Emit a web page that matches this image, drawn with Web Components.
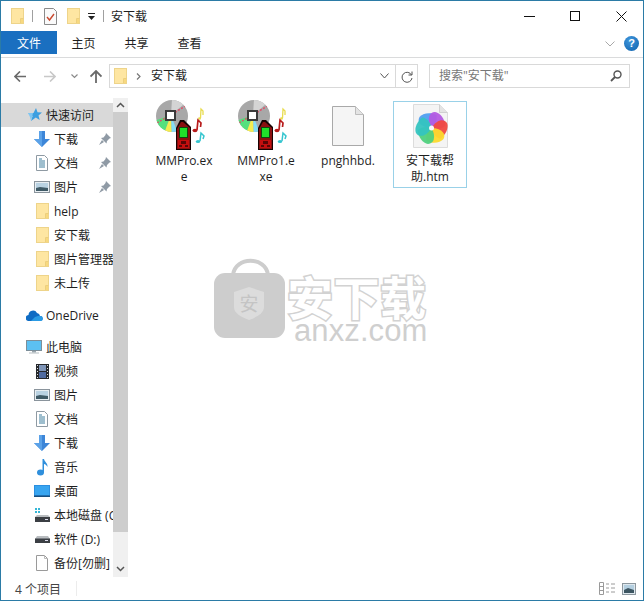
<!DOCTYPE html>
<html lang="zh">
<head>
<meta charset="utf-8">
<title>安下载</title>
<style>
  html, body { margin: 0; height: 100%; background: #fff; }
  body { font: 12px "Open Sans", "Noto Sans CJK SC", sans-serif; color: #1e1e1e; }
</style>
</head>
<body>
<explorer-window>
  <title-bar slot="title">安下载</title-bar>
  <ribbon-tabs slot="ribbon"></ribbon-tabs>
  <address-row slot="address"></address-row>
  <nav-tree slot="nav">
    <nav-item icon="star" level="1" selected>快速访问</nav-item>
    <nav-item icon="down" pin>下载</nav-item>
    <nav-item icon="doc" pin>文档</nav-item>
    <nav-item icon="pic" pin>图片</nav-item>
    <nav-item icon="folder">help</nav-item>
    <nav-item icon="folder">安下载</nav-item>
    <nav-item icon="folder">图片管理器</nav-item>
    <nav-item icon="folder">未上传</nav-item>
    <nav-item icon="cloud" level="1" class="group">OneDrive</nav-item>
    <nav-item icon="pc" level="1" class="group">此电脑</nav-item>
    <nav-item icon="film">视频</nav-item>
    <nav-item icon="pic">图片</nav-item>
    <nav-item icon="doc">文档</nav-item>
    <nav-item icon="down">下载</nav-item>
    <nav-item icon="note">音乐</nav-item>
    <nav-item icon="desk">桌面</nav-item>
    <nav-item icon="sysdisk">本地磁盘 (C:)</nav-item>
    <nav-item icon="disk">软件 (D:)</nav-item>
    <nav-item icon="page">备份[勿删]</nav-item>
  </nav-tree>
  <file-pane slot="files">
    <file-item icon="mmpro">MMPro.exe</file-item>
    <file-item icon="mmpro">MMPro1.exe</file-item>
    <file-item icon="blank">pnghhbd.</file-item>
    <file-item icon="wheel" selected>安下载帮助.htm</file-item>
  </file-pane>
  <water-mark slot="files"></water-mark>
  <status-bar slot="status">4 个项目</status-bar>
</explorer-window>

<script>
// Folder and pictures are used in many places, so all icons live in one table.
const folder = `<svg width="13" height="16" viewBox="0 0 13 16"><rect x=".5" y=".5" width="12" height="15" fill="#fee6a2" stroke="#eed48a"/><path d="M9.500 15v-4.500H12.500" fill="none" stroke="#eccf7e"/><rect x="10" y="11" width="2" height="4" fill="#f8d97f"/></svg>`

const petals = [['#4f9ff0', 0], ['#b45be2', 60], ['#f04a40', 120], ['#fcd92e', 180], ['#4fd07f', 240], ['#35c4c0', 300]]

const icons = {
  folder,
  check: `<svg width="13" height="17" viewBox="0 0 13 17"><path d="M.5.500h9l3 3v13H.5z" fill="#fafafa" stroke="#8a8a8a"/><path d="M3 9l2.500 3L10 6" fill="none" stroke="#c9492f" stroke-width="1.400"/></svg>`,
  star: `<svg width="15" height="14" viewBox="0 0 15 14"><path d="M9 0l1.500 4.200L15 4.500l-3.500 3 1.200 4.600L8.800 9.500 4 13l1.600-5L1 5h5.500z" fill="#3d9fe0"/><path d="M1 5h5L4 13l-1-4z" fill="#7fc6f2"/></svg>`,
  down: `<svg width="16" height="16" viewBox="0 0 16 16"><path d="M5 0h6v8h5l-8 8-8-8h5z" fill="#3d86d8"/><path d="M5 0h3v16L0 8h5z" fill="#5ba2e8"/></svg>`,
  doc: `<svg width="12" height="16" viewBox="0 0 12 16"><path d="M.5.500h8l3 3v12H.5z" fill="#fff" stroke="#8f9aa3"/><path d="M3 4h3M3 6h6M3 8h6M3 10h6M3 12h6" stroke="#3f7f9e"/></svg>`,
  pic: `<svg width="16" height="12" viewBox="0 0 16 12"><rect x=".5" y=".5" width="15" height="11" fill="#e8eef2" stroke="#8a949c"/><rect x="2" y="2" width="12" height="8" fill="#b9d2e2"/><path d="M2 7l4-1 8 1v3H2z" fill="#3f5a66"/></svg>`,
  cloud: `<svg width="17" height="11" viewBox="0 0 17 11"><path d="M3 11a3 3 0 0 1-.5-6A4.500 4.500 0 0 1 11 3a3.500 3.500 0 0 1 3 3 2.500 2.500 0 0 1 .5 5z" fill="#0f6cc4"/><path d="M5 11l4-4 3-1 2 0a2.500 2.500 0 0 1 .5 5z" fill="#2a9be4"/></svg>`,
  pc: `<svg width="16" height="14" viewBox="0 0 16 14"><rect x=".5" y=".5" width="15" height="10" fill="#5cc0f2" stroke="#7c8e99"/><rect x="6" y="11" width="4" height="1.500" fill="#9aa6ad"/><rect x="3" y="12.500" width="10" height="1" fill="#b5bdc2"/></svg>`,
  film: `<svg width="13" height="15" viewBox="0 0 13 15"><rect width="13" height="15" fill="#26282c"/><rect x="3" y="1" width="7" height="6" fill="#7f95b8"/><rect x="3" y="8" width="7" height="6" fill="#4f6aa0"/><path d="M1 1h1v1H1zM1 4h1v1H1zM1 7h1v1H1zM1 10h1v1H1zM1 13h1v1H1zM11 1h1v1h-1zM11 4h1v1h-1zM11 7h1v1h-1zM11 10h1v1h-1zM11 13h1v1h-1z" fill="#ddd"/></svg>`,
  note: `<svg width="11" height="17" viewBox="0 0 11 17"><ellipse cx="3.500" cy="13.500" rx="3.500" ry="3" fill="#2f8fdc"/><path d="M5.500 0h1.500c.5 3 4 4 3.500 8-1-2-2.500-3-3.500-3v8.500h-1.500z" fill="#2f8fdc"/></svg>`,
  desk: `<svg width="16" height="12" viewBox="0 0 16 12"><rect width="16" height="12" fill="#2b8fe0"/><rect x="1" y="1" width="14" height="9" fill="#38a5f0"/><rect y="10.500" width="16" height="1.500" fill="#174f80"/></svg>`,
  sysdisk: `<svg width="15" height="14" viewBox="0 0 15 14"><path d="M0 0h2v2H0zM3 0h2v2H3zM0 3h2v2H0zM3 3h2v2H3z" fill="#35b6d6"/><path d="M0 9l2-2h11l2 2z" fill="#b9bdc0"/><rect y="9" width="15" height="5" fill="#3b3f44"/><rect x="10" y="11" width="3" height="1" fill="#dde"/></svg>`,
  disk: `<svg width="15" height="7" viewBox="0 0 15 7"><path d="M0 3l2-3h11l2 3z" fill="#b9bdc0"/><rect y="2.500" width="15" height="4.500" fill="#3b3f44"/><rect x="10" y="4" width="3" height="1" fill="#dde"/></svg>`,
  page: `<svg width="12" height="16" viewBox="0 0 12 16"><path d="M.5.500h8l3 3v12H.5z" fill="#fff" stroke="#9a9a9a"/><path d="M8.500.500v3h3" fill="none" stroke="#bbb"/></svg>`,
  // the music player program, a cd with a red player in front of it
  mmpro: `<svg width="48" height="48" viewBox="0 0 48 48" overflow="visible">
    <defs><clipPath id="c"><circle cx="12" cy="13" r="16"/></clipPath></defs>
    <g clip-path="url(#c)">
      <rect x="-5" y="-4" width="34" height="36" fill="#a8a8a8"/>
      <path d="M11 12L30 -4H12z" fill="#d4d4d4"/>
      <path d="M11 12L-6 18v18h8z" fill="#55e07e"/>
      <path d="M11 12L2 36h10z" fill="#f4ec50"/>
      <path d="M11 12l1 24h8z" fill="#84dcf4"/>
      <path d="M-3 20L29 1" stroke="#e0506a" stroke-dasharray="2 1.500" stroke-width="1.500"/>
      <rect x="5" y="7" width="11" height="11" fill="#3a3a3a"/>
      <rect x="7" y="9" width="7" height="7" fill="#fff"/>
    </g>
    <path d="M16 25l4-8h4l7 7v23H16z" fill="#180303"/>
    <path d="M17 26l4-7h2l7 6v21H17z" fill="#8a1010"/>
    <rect x="19.500" y="24.500" width="8" height="10" fill="#1fe02a" stroke="#0b4a10"/>
    <path d="M18 37h11v8H18z" fill="#c40f0f"/>
    <path d="M21 38h5v3h-5zM19 42h3v2h-3zM25 42h3v2h-3z" fill="#5a0606"/>
    <ellipse cx="39.500" cy="15.500" rx="1.500" ry="1.200" fill="#e8dc50"/>
    <path d="M40.500 15L41 6l2 2v4" fill="none" stroke="#e8dc50" stroke-width="1.300"/>
    <ellipse cx="35" cy="27.500" rx="2.500" ry="1.700" fill="#b81c1c"/>
    <path d="M37 27l1-10 3 3-.5 4" fill="none" stroke="#b81c1c" stroke-width="1.700"/>
    <ellipse cx="38" cy="38.500" rx="2.200" ry="1.600" fill="#35c5cf"/>
    <path d="M40 38l1-8 3 3-1 3" fill="none" stroke="#35c5cf" stroke-width="1.500"/>
  </svg>`,
  blank: `<svg width="48" height="48" viewBox="0 0 48 48"><path d="M8.500 3.500h23l8 8v31h-31z" fill="#f5f5f5" stroke="#a9a9a9"/><path d="M31.500 3.500v8h8" fill="#e4e4e4" stroke="#bdbdbd"/></svg>`,
  wheel: `<svg width="48" height="48" viewBox="0 0 48 48"><path d="M7.500 1.500h26l8 8v35h-34z" fill="#f4f4f4" stroke="#dcdcdc"/><path d="M33.500 1.500v8h8" fill="#e4e4e4" stroke="#d0d0d0"/>
    ${petals.map(([c, a]) => `<path transform="rotate(${a} 25.500 25)" d="M25.500 25C15.500 25 10.500 19 13.500 14c3-4 11-5 17-2 1 5-1 10-5 13z" fill="${c}" opacity=".95"/>`).join('')}
    <circle cx="25.500" cy="25" r="2.500" fill="#f8f8f8"/></svg>`
}

/**
 * Registers a small element with a shadow root made from the given html.
 *
 * @param {string} name tag name
 * @param {string} html styles and markup
 */
function simple (name, html) {
  const template = document.createElement('template')
  template.innerHTML = html
  customElements.define(name, class extends HTMLElement {
    constructor () {
      super()
      this.attachShadow({ mode: 'open' }).appendChild(template.content.cloneNode(true))
    }
  })
}

simple('explorer-window', `
  <style>
    :host { display: grid; grid-template-rows: 30px 27px 38px 1fr 23px; grid-template-columns: minmax(0, 1fr); width: 644px; height: 601px; box-sizing: border-box; border: 1px solid #2b7ba6; background: #fff; overflow: hidden; }
    .main { display: grid; grid-template-columns: 112px 15px 1fr; min-height: 0; }
    .files { position: relative; min-width: 0; }
    .bar { display: flex; flex-direction: column; background: #f0f0f0; margin-top: 2px; }
    .bar i { display: flex; height: 14px; align-items: center; justify-content: center; }
    .bar b { height: 420px; background: #cdcdcd; }
    .bar u { flex: 1; }
    .bar i:last-child { height: 17px; }
  </style>
  <slot name="title"></slot>
  <slot name="ribbon"></slot>
  <slot name="address"></slot>
  <div class="main">
    <slot name="nav"></slot>
    <div class="bar">
      <i><svg width="9" height="6" viewBox="0 0 9 6"><path d="M1 5l3.500-3.500L8 5" fill="none" stroke="#555" stroke-width="1.500"/></svg></i>
      <b></b>
      <u></u>
      <i><svg width="9" height="6" viewBox="0 0 9 6"><path d="M1 1l3.500 3.500L8 1" fill="none" stroke="#555" stroke-width="1.500"/></svg></i>
    </div>
    <div class="files"><slot name="files"></slot></div>
  </div>
  <slot name="status"></slot>
`)

simple('title-bar', `
  <style>
    :host { display: flex; align-items: center; height: 30px; }
    .left { display: flex; align-items: center; padding-left: 10px; }
    .sep { width: 1px; height: 12px; background: #a0a0a0; }
    .name { margin-left: 7px; }
    .controls { display: flex; margin-left: auto; margin-right: -1px; }
    .controls div { width: 46px; height: 29px; display: flex; align-items: center; justify-content: center; }
  </style>
  <div class="left">
    ${folder}
    <span class="sep" style="margin:0 11px 0 8px"></span>
    ${icons.check}
    <span style="width:10px"></span>
    ${folder}
    <svg style="margin:0 8px 0 8px" width="7" height="7" viewBox="0 0 7 7"><path d="M0 0h7v1H0zM0 3h7L3.500 7z" fill="#222"/></svg>
    <span class="sep"></span>
  </div>
  <span class="name"><slot></slot></span>
  <div class="controls">
    <div><svg width="11" height="1"><rect width="11" height="1" fill="#111"/></svg></div>
    <div><svg width="10" height="10"><rect x=".5" y=".5" width="9" height="9" fill="none" stroke="#111"/></svg></div>
    <div><svg width="11" height="11"><path d="M.5.500l10 10M10.500.500l-10 10" stroke="#111"/></svg></div>
  </div>
`)

simple('ribbon-tabs', `
  <style>
    :host { display: flex; align-items: flex-start; height: 27px; box-sizing: border-box; border-bottom: 1px solid #dadbdc; }
    .file { width: 56px; height: 23px; background: #1a6fc0; color: #fff; display: flex; align-items: center; justify-content: center; }
    .tab { width: 53px; height: 23px; display: flex; align-items: center; justify-content: center; }
    .right { margin-left: auto; display: flex; align-items: center; gap: 9px; padding: 5px 4px 0 0; }
    .help { width: 15px; height: 15px; border-radius: 50%; background: radial-gradient(circle at 40% 30%, #3f96dc, #0f62ad); color: #fff; font: bold 11px/15px "Liberation Sans", sans-serif; text-align: center; }
  </style>
  <div class="file">文件</div>
  <div class="tab">主页</div>
  <div class="tab">共享</div>
  <div class="tab">查看</div>
  <div class="right">
    <svg width="10" height="6" viewBox="0 0 10 6"><path d="M.5.500L5 5 9.500.500" fill="none" stroke="#a8a8a8"/></svg>
    <div class="help">?</div>
  </div>
`)

simple('address-row', `
  <style>
    :host { display: flex; align-items: center; height: 38px; box-sizing: border-box; padding: 6px 13px 8px 13px; }
    svg { flex: none; }
    .box { display: flex; align-items: center; height: 24px; box-sizing: border-box; border: 1px solid #d9d9d9; }
    .box > span { padding-bottom: 2px; }
    .path { width: 309px; margin-left: 7px; padding-left: 4px; }
    .path .right { margin-left: auto; display: flex; align-items: center; height: 100%; }
    .search { width: 201px; margin-left: 11px; padding: 0 7px 0 9px; color: #777; justify-content: space-between; }
  </style>
  <svg width="12" height="11" viewBox="0 0 12 11"><path d="M6 .5L1 5.500l5 5M1 5.500h11" fill="none" stroke="#6a6a6a" stroke-width="1.600"/></svg>
  <svg style="margin-left:18px" width="12" height="11" viewBox="0 0 12 11"><path d="M6 .5l5 5-5 5M11 5.500H0" fill="none" stroke="#c8c8c8" stroke-width="1.600"/></svg>
  <svg style="margin-left:15px" width="7" height="5" viewBox="0 0 7 5"><path d="M.5.500l3 3 3-3" fill="none" stroke="#8a8a8a" stroke-width="1.200"/></svg>
  <svg style="margin-left:12px" width="12" height="13" viewBox="0 0 12 13"><path d="M.5 6.500L6 1l5.500 5.500M6 1v12" fill="none" stroke="#6a6a6a" stroke-width="1.800"/></svg>
  <div class="box path">
    ${folder}
    <svg style="margin:0 10px 0 9px" width="5" height="7" viewBox="0 0 5 7"><path d="M1 .5l3 3-3 3" fill="none" stroke="#777" stroke-width="1.200"/></svg>
    <span>安下载</span>
    <div class="right">
      <svg width="9" height="6" viewBox="0 0 9 6"><path d="M.5.500L4.500 5 8.500.500" fill="none" stroke="#555"/></svg>
      <span style="width:1px;height:100%;background:#d9d9d9;margin:0 5px 0 6px"></span>
      <svg style="margin-right:4px" width="12" height="13" viewBox="0 0 12 13"><path d="M10.500 5A5 5 0 1 0 11 8M11 1.500V5H7.500" fill="none" stroke="#555"/></svg>
    </div>
  </div>
  <div class="box search">
    <span>搜索"安下载"</span>
    <svg width="12" height="12" viewBox="0 0 12 12"><circle cx="7.500" cy="4.500" r="3.500" fill="none" stroke="#555" stroke-width="1.400"/><path d="M5 7l-4 4" stroke="#555" stroke-width="1.800"/></svg>
  </div>
`)

simple('nav-tree', `
  <style>
    :host { display: block; padding-top: 7px; overflow: hidden; height: 100%; box-sizing: border-box; }
    ::slotted(.group) { margin-top: 8px; }
  </style>
  <slot></slot>
`)

// One row of the navigation tree, level 1 rows sit further to the left.
customElements.define('nav-item', class extends HTMLElement {
  constructor () {
    super()
    const top = this.getAttribute('level') === '1'
    const icon = this.getAttribute('icon')
    this.attachShadow({ mode: 'open' }).innerHTML = `
      <style>
        :host { display: flex; align-items: center; height: 24px; white-space: nowrap; overflow: hidden; position: relative; }
        :host([selected]) { background: #d9d9d9; }
        .icon { flex: none; display: flex; align-items: center; justify-content: center; width: ${top ? 18 : 16}px; margin-left: ${top ? 24 : 33}px; margin-right: ${top ? 3 : 4}px; }
        .pin { position: absolute; left: 98px; }
      </style>
      <span class="icon">${icons[icon]}</span>
      <span><slot></slot></span>
      ${this.hasAttribute('pin') ? '<svg class="pin" width="12" height="12" viewBox="0 0 12 12"><path d="M7 0l5 5-1.500.5L8 8l-.5 2.500L2 5l2.500-.5L6.500 2z M3 7l-3 5 5-3z" fill="#8f9aa5"/></svg>' : ''}
    `
  }
})

simple('file-pane', `
  <style>
    :host { display: flex; align-items: flex-start; gap: 8px; padding: 5px 0 0 19px; }
  </style>
  <slot></slot>
`)

customElements.define('file-item', class extends HTMLElement {
  constructor () {
    super()
    this.attachShadow({ mode: 'open' }).innerHTML = `
      <style>
        :host { display: flex; flex-direction: column; align-items: center; width: 74px; height: 87px; box-sizing: border-box; padding-top: 1px; border: 1px solid transparent; text-align: center; }
        :host([selected]) { border-color: #99d1e8; }
        .icon { height: 48px; width: 48px; }
        .label { width: 62px; line-height: 16px; margin-top: 2px; overflow-wrap: anywhere; }
      </style>
      <div class="icon">${icons[this.getAttribute('icon')]}</div>
      <div class="label"><slot></slot></div>
    `
  }
})

simple('water-mark', `
  <style>
    :host { position: absolute; left: 86px; top: 160px; display: flex; align-items: flex-start; pointer-events: none; }
    .text { margin-left: 1px; padding-top: 16px; }
    .cn { font: bold 46px/46px "Noto Sans CJK SC", sans-serif; color: #fff; -webkit-text-stroke: 3px #d2d2d2; paint-order: stroke fill; letter-spacing: .5px; }
    .en { font: 31px/26px "Liberation Sans", sans-serif; color: #cfcfcf; margin-left: 7px; letter-spacing: .1px; }
  </style>
  <svg width="72" height="82" viewBox="0 0 72 82">
    <path d="M19 19C21 0 52 0 54 19" fill="none" stroke="#cdcdcd" stroke-width="4"/>
    <rect x="0" y="17" width="71" height="65" rx="11" fill="#cdcdcd"/>
    <path d="M20 36l15-5 15 5v15c0 6-7 10-15 13-8-3-15-7-15-13z" fill="#dcdcdc"/>
    <text x="35" y="55" font-size="19" text-anchor="middle" fill="#c4c4c4" font-family="Noto Sans CJK SC">安</text>
  </svg>
  <div class="text">
    <div class="cn">安下载</div>
    <div class="en">anxz.com</div>
  </div>
`)

simple('status-bar', `
  <style>
    :host { display: flex; align-items: center; height: 23px; color: #444; padding-left: 14px; }
    .sep { width: 1px; height: 15px; background: #ececec; margin-left: 15px; }
    .views { margin-left: auto; display: flex; align-items: center; gap: 7px; padding-right: 7px; }
  </style>
  <span><slot></slot></span>
  <span class="sep"></span>
  <div class="views">
    <svg width="16" height="13" viewBox="0 0 16 13"><path d="M.5.500h4v12h-4zM.5 4.500h4M.5 8.500h4" fill="none" stroke="#9a9a9a"/><path d="M7 2h3M12 2h4M7 6h3M12 6h4M7 10h3M12 10h4" stroke="#9a9a9a"/></svg>
    <svg width="14" height="12" viewBox="0 0 14 12"><rect x=".5" y=".5" width="13" height="11" fill="#dfe8ee" stroke="#8c979e"/><rect x="2" y="2" width="10" height="8" fill="#b4cfe0"/><path d="M2 7l4-2 6 2v3H2z" fill="#3c5561"/></svg>
  </div>
`)
</script>
</body>
</html>
